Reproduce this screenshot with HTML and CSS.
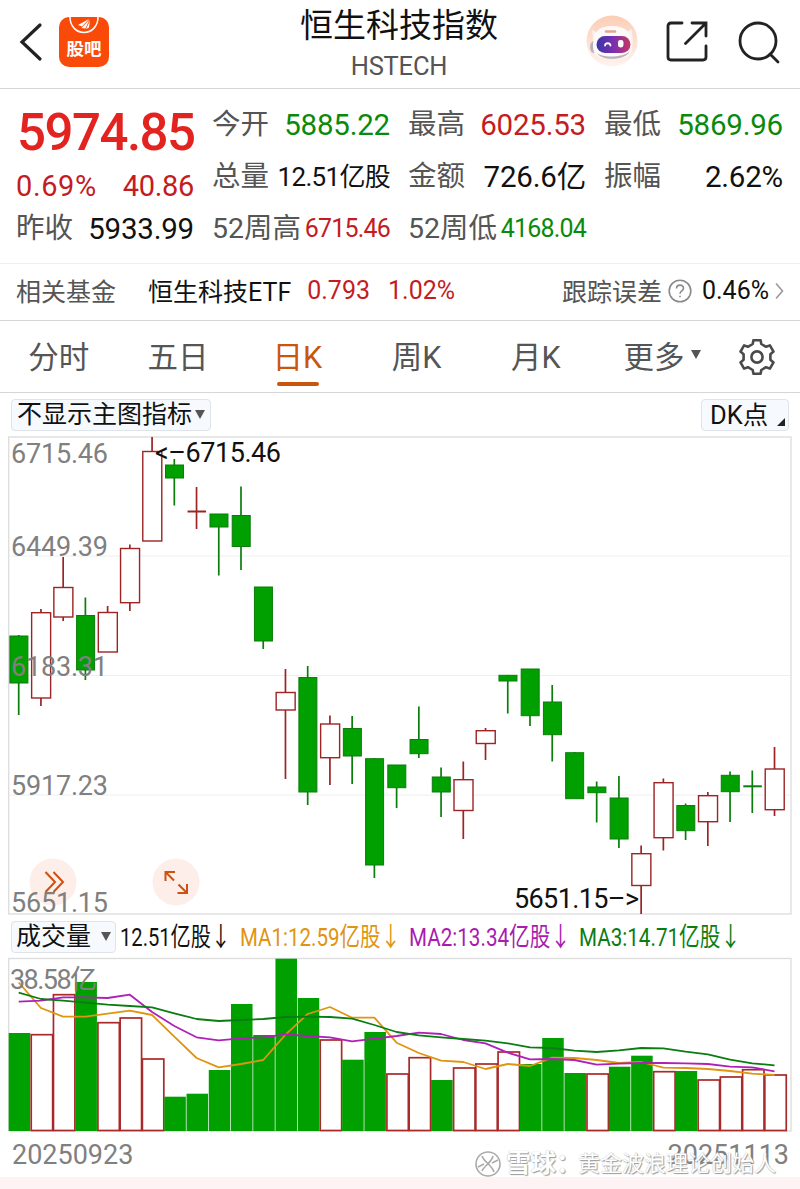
FILE: index.html
```html
<!DOCTYPE html>
<html lang="zh-CN">
	<head>
		<meta charset="UTF-8">
		<meta name="viewport" content="width=device-width, initial-scale=1">
		<title>恒生科技指数 HSTECH</title>
		<link rel="stylesheet" href="styles.css">
	</head>

	<body>
		<header class="topbar">
			<div class="topbar-left">
				<svg class="back" width="24" height="40" viewBox="0 0 24 40"><path d="M21 3L3 20L21 37" /></svg>
				<div class="guba">
					<svg width="30" height="17" viewBox="0 0 30 17">
						<path class="guba-arc" d="M1 0C1 9 7 15.500 15 15.500S29 9 29 0" />
						<path class="guba-leaf" d="M9 8L20 2L13 9.500ZM12.500 11L20.500 2.500L16.500 11.500ZM17 12L21 3.500L20 10.500Z" />
					</svg>
					<span>股吧</span>
				</div>
			</div>
			<div class="topbar-title">
				<h1>恒生科技指数</h1>
				<p>HSTECH</p>
			</div>
			<div class="topbar-right">
				<svg width="52" height="52" viewBox="0 0 52 52">
					<defs>
						<linearGradient id="visor"><stop offset="0" stop-color="#3b36a8" /><stop offset=".5" stop-color="#7a2fb0" /><stop offset="1" stop-color="#c8385e" /></linearGradient>
						<linearGradient id="halo" x2="0" y2="1"><stop offset="0" stop-color="#fccdb6" /><stop offset="1" stop-color="#fff3ee" /></linearGradient>
					</defs>
					<circle cx="26" cy="26" r="25.500" fill="url(#halo)" />
					<path d="M6 15L14 19L8 30ZM38 18L46 14L47 30Z" fill="#f7f2f0" />
					<ellipse cx="8" cy="32" rx="4" ry="6" fill="#b9b1ba" />
					<path d="M7 30C7 17 13 11 26 11S46 17 46 30S40 43 26 43S7 42 7 30Z" fill="#fbf9f9" />
					<path d="M11 38C15 43 38 43 44 36C40 46 15 46 11 38Z" fill="#b9b1bc" />
					<path d="M20 16.500H29" stroke="#e3a58f" stroke-width="2.500" stroke-linecap="round" />
					<rect x="10.500" y="21" width="34" height="17" rx="8.500" fill="url(#visor)" />
					<path d="M19 30.500C19.500 27.500 24 27.500 24.500 30.500" fill="none" stroke="#fff" stroke-width="1.800" stroke-linecap="round" />
					<rect x="32" y="25" width="5.500" height="7.500" rx="2.400" fill="#fff" />
				</svg>
				<svg class="line-icon" width="42" height="42" viewBox="0 0 42 42"><path d="M16 2H5Q2 2 2 5V36Q2 39 5 39H37Q40 39 40 36V25M26 2H40V15M39 3L19.500 22.500" /></svg>
				<svg class="line-icon" width="44" height="44" viewBox="0 0 44 44"><circle cx="20" cy="20" r="18" /><path d="M32 33L40 41" /></svg>
			</div>
		</header>

		<section class="quote">
			<div class="price">5974.85</div>
			<div class="item"><label>今开</label><b class="down">5885.22</b></div>
			<div class="item"><label>最高</label><b class="up">6025.53</b></div>
			<div class="item"><label>最低</label><b class="down">5869.96</b></div>

			<div class="item change"><b class="up percent">0.69%</b><b class="up">40.86</b></div>
			<div class="item"><label>总量</label><b class="tight">12.51亿股</b></div>
			<div class="item"><label>金额</label><b>726.6亿</b></div>
			<div class="item"><label>振幅</label><b>2.62%</b></div>

			<div class="item"><label>昨收</label><b>5933.99</b></div>
			<div class="item"><label>52周高</label><b class="small up">6715.46</b></div>
			<div class="item"><label>52周低</label><b class="small down">4168.04</b></div>
		</section>

		<section class="fund">
			<span class="muted">相关基金</span>
			<span class="fund-name">恒生科技ETF</span>
			<span class="up fund-price">0.793</span>
			<span class="up">1.02%</span>
			<span class="muted fund-error">跟踪误差</span>
			<svg class="help" width="24" height="24" viewBox="0 0 24 24"><circle cx="12" cy="12" r="10.800" /><path d="M8.500 9.500C8.500 5 15.500 5 15.500 9.300C15.500 12 12 12 12 14.800M12 16.800V18.300" /></svg>
			<span>0.46%</span>
			<svg class="more" width="9" height="18" viewBox="0 0 9 18"><path d="M1 1.500L7.500 9L1 16.500" /></svg>
		</section>

		<nav class="tabs">
			<a>分时</a>
			<a>五日</a>
			<a class="active">日K</a>
			<a>周K</a>
			<a>月K</a>
			<a>更多<i class="caret"></i></a>
			<svg class="gear" width="38" height="38" viewBox="-19 -19 38 38">
				<path d="M-4.300 -13L-3.600 -16.800H3.600L4.300 -13L9.100 -10.200L12.900 -11.600L16.500 -5.400L13.400 -2.800V2.800L16.500 5.400L12.900 11.600L9.100 10.200L4.300 13L3.600 16.800H-3.600L-4.300 13L-9.100 10.200L-12.900 11.600L-16.500 5.400L-13.400 2.800V-2.800L-16.500 -5.400L-12.900 -11.600L-9.100 -10.200Z" />
				<circle r="5.600" />
			</svg>
		</nav>

		<div class="toolbar">
			<button class="chip">不显示主图指标<i class="caret"></i></button>
			<button class="chip chip-dk">DK点<i class="corner"></i></button>
		</div>

		<svg id="kline" class="chart" width="800" height="480" viewBox="0 436 800 480"></svg>

		<div class="legend">
			<button class="chip chip-vol">成交量<i class="caret"></i></button>
			<svg width="684" height="34" viewBox="116 0 684 34">
				<text x="120" y="26" textLength="111" lengthAdjust="spacingAndGlyphs" fill="#111">12.51亿股↓</text>
				<text x="240" y="26" textLength="161" lengthAdjust="spacingAndGlyphs" fill="#e0940f">MA1:12.59亿股↓</text>
				<text x="409" y="26" textLength="162" lengthAdjust="spacingAndGlyphs" fill="#a81cb0">MA2:13.34亿股↓</text>
				<text x="579" y="26" textLength="162" lengthAdjust="spacingAndGlyphs" fill="#0a7d12">MA3:14.71亿股↓</text>
			</svg>
		</div>

		<svg id="volume" class="chart" width="800" height="176" viewBox="0 957 800 176"></svg>

		<footer class="dates">
			<span>20250923</span>
			<span>20251113</span>
			<div class="watermark">
				<svg width="28" height="28" viewBox="0 0 28 28"><circle cx="14" cy="14" r="12" /><path d="M8 6C10 12 18 15 20 22M19 6C18 12 10 16 8 21M4 17L10 14M18 13L24 10" /></svg>
				<strong>雪球：</strong><span>黄金波浪理论创始人</span>
			</div>
		</footer>

		<script src="charts.js"></script>
	</body>
</html>
```

FILE: styles.css
```css
body, html { margin: 0; padding: 0; }
body { width: 800px; height: 1189px; overflow: hidden; background: #fff; color: #111; font-family: Roboto, "Noto Sans CJK SC", sans-serif; font-weight: 400; }
h1, p { margin: 0; font-weight: 400; }
svg { display: block; flex: none; }
b { font-weight: 400; }
.up { color: #c41c22; }
.down { color: #0a8a0a; }
.muted { color: #555; }

/* Top bar */
.topbar { display: grid; grid-template-columns: 1fr 220px 1fr; height: 88px; border-bottom: 1px solid #d6d6d6; }
.topbar-left { display: flex; align-items: flex-start; padding: 17px 0 0 19px; gap: 16px; }
.back { margin-top: 5px; fill: none; stroke: #222; stroke-width: 3.2; stroke-linecap: round; }
.guba { display: flex; flex-direction: column; align-items: center; width: 50px; height: 50px; border-radius: 10px; background: #fa4a0a; color: #fff; }
.guba span { font-size: 17.5px; line-height: 26px; font-weight: 700; margin-top: 2px; }
.guba-arc { fill: none; stroke: #fff; stroke-width: 1.5; }
.guba-leaf { fill: #fff; }
.topbar-title { text-align: center; padding-top: 2px; margin-left: -2px; }
.topbar-title h1 { font-size: 33px; line-height: 48px; white-space: nowrap; }
.topbar-title p { font-size: 25.5px; line-height: 32px; color: #555; letter-spacing: -.2px; }
.topbar-right { display: flex; align-items: flex-start; justify-content: flex-end; padding: 15px 18px 0 0; }
.line-icon { margin: 6px 0 0 28px; fill: none; stroke: #222; stroke-width: 2.8; stroke-linecap: round; }
.line-icon + .line-icon { margin-left: 30px; }

/* Quote numbers */
.quote { display: grid; grid-template-columns: 178px 178px 178px 179px; grid-template-rows: 52px 52px 52px; column-gap: 18px; padding: 10px 17px 8px 16px; height: 156px; border-bottom: 1px solid #eee; }
.price { padding-left: 1px; font-size: 51px; line-height: 68px; font-weight: 500; letter-spacing: -1.5px; color: #e3231f; white-space: nowrap; }
.item { display: flex; align-items: center; justify-content: space-between; line-height: 52px; white-space: nowrap; }
.item label { font-size: 28.5px; color: #555; }
.item b { font-size: 29.5px; letter-spacing: -.2px; }
.item .tight { font-size: 26px; letter-spacing: -.7px; }
.item .small { font-size: 25px; letter-spacing: -.8px; }
.change { padding-top: 17px; height: 35px; }
.item.change b { font-size: 29px; letter-spacing: -.3px; }
.item.change .percent { letter-spacing: .6px; }

/* Related fund */
.fund { display: flex; align-items: center; height: 53px; padding: 0 16px 3px 16px; border-bottom: 1px solid #d6d6d6; font-size: 25px; white-space: nowrap; }
.fund-name { margin-left: 32px; }
.fund-price { margin: 0 18px 0 16px; }
.fund-error { margin-left: auto; }
.help { margin: 0 10px 0 6px; fill: none; stroke: #8a8a8a; stroke-width: 1.6; }
.fund .muted, .fund-name { position: relative; top: -1px; }
.more { margin-left: 6px; fill: none; stroke: #999; stroke-width: 1.6; }

/* Period tabs */
.tabs { display: flex; align-items: center; height: 71px; border-bottom: 1px solid #d6d6d6; color: #555; font-size: 30.5px; }
.tabs a { display: flex; align-items: center; justify-content: center; position: relative; box-sizing: border-box; width: 119.3px; height: 71px; padding: 0 2px 4px 0; }
.tabs a.active { color: #c8560f; }
.tabs a.active:after { content: ""; position: absolute; left: 38px; bottom: 6px; width: 42px; height: 4px; border-radius: 2px; background: #c8560f; }
.tabs a:nth-child(6) { width: 134px; }
.gear { margin-left: 8px; fill: none; stroke: #4a4a4a; stroke-width: 2.6; stroke-linejoin: round; }
.caret { display: inline-block; margin-left: 7px; border: 5.5px solid transparent; border-top: 9px solid #555; border-bottom: 0; }

/* Chart toolbars */
.toolbar { display: flex; justify-content: space-between; align-items: center; height: 43px; padding: 0 11px 0 11px; }
.chip { display: flex; align-items: center; box-sizing: border-box; height: 32px; padding: 0 5px; border: 1px solid #dfe4ea; border-radius: 4px; background: #f6f9fd; color: #111; font: inherit; font-size: 25px; line-height: 30px; white-space: nowrap; }
.chip .caret { margin-left: 3px; }
.chip-dk { width: 88px; padding-left: 8px; position: relative; font-size: 25.5px; }
.corner { position: absolute; right: 3px; bottom: 4px; border-left: 8px solid transparent; border-bottom: 8px solid #222; }
.chip-vol { width: 105px; padding: 0 4px; justify-content: space-between; }
.legend { display: flex; align-items: center; height: 41px; padding-left: 11px; }
.legend text { font-size: 26.5px; }

/* Charts */
.frame { fill: none; stroke: #dedede; stroke-width: 1.4; }
.grid { stroke: #eee; stroke-width: 1; }
.rise { fill: #fff; stroke: #9c2424; stroke-width: 1.4; }
.fall { fill: #00a000; stroke: #0a7d0a; stroke-width: 1; }
.wick { stroke-width: 1.7; }
.doji { stroke-width: 2; }
.bar-rise { fill: #fff; stroke: #a82a2a; stroke-width: 1.7; }
.bar-fall { fill: #00a000; }
.ma { fill: none; stroke-width: 1.8; stroke-linejoin: round; }
.axis { font-size: 27px; fill: #808080; }
.mark { font-size: 27px; fill: #111; }
.tool { fill: none; stroke: #d05010; stroke-width: 2; }
.tool-bg { fill: #fdeee9; }

/* Dates */
.dates { display: flex; justify-content: space-between; position: relative; height: 44px; padding: 0 11px 0 12px; font-size: 27px; line-height: 44px; color: #808080; border-bottom: 12px solid #fdf3f5; }
.watermark { position: absolute; left: 474px; top: 9px; display: flex; align-items: center; white-space: nowrap; line-height: 44px; color: #fff; text-shadow: 1px 1px 1px #999, 0 0 1px #aaa; }
.watermark svg { margin-right: 4px; fill: none; stroke: #aaa; stroke-width: 1.6; }
.watermark strong { font-size: 25px; font-weight: 700; width: 72px; }
.watermark span { font-size: 22px; }
```

FILE: charts.js
```javascript
var step = 22.23;
var first = 18.7;

/* type, body top, body bottom, high, low */
var candles = [
	["g", 636, 683, 635, 715], ["r", 612.7, 698, 609, 706], ["r", 587.5, 617, 557, 621], ["g", 615.5, 670, 597.5, 680],
	["r", 612.5, 652, 606, 652], ["r", 548.5, 602.7, 544.5, 611], ["r", 451.5, 541, 437, 541], ["g", 465, 478, 459, 505.5],
	["r", 511.5, 511.5, 487, 529], ["g", 514, 527, 514, 575.5], ["g", 515.5, 546.5, 486.5, 570], ["g", 587, 641, 587, 649],
	["r", 692.5, 710, 669, 779], ["g", 677.5, 792, 666, 805], ["r", 724, 757.7, 715.5, 785], ["g", 728.5, 756, 716, 784],
	["g", 758.7, 865, 758, 878], ["g", 765, 787.7, 765, 808], ["g", 739.5, 753.7, 706.5, 758], ["g", 777, 792, 767.5, 817],
	["r", 779.7, 810.5, 761.5, 839], ["r", 730.7, 743.5, 728, 760], ["g", 675.3, 681, 675, 713.5], ["g", 669, 715.7, 669, 726],
	["g", 702, 734.7, 685, 761.5], ["g", 752.7, 798.7, 752, 798], ["g", 787, 792.7, 781.5, 822.5], ["g", 798, 839, 776, 848],
	["r", 853.7, 885.5, 845.5, 914], ["r", 782.7, 837.7, 778.5, 850.5], ["g", 805.5, 830.7, 803.5, 840], ["r", 795.7, 821.7, 792, 846],
	["g", 775.3, 791.7, 771.5, 822], ["g", 786.3, 786.3, 770.5, 813], ["r", 769, 809.7, 747, 816]
];

var volumes = [
	1033, 1034.7, 994.7, 982, 1022.7, 1018, 1059, 1096.7, 1093.7, 1070, 1004, 1035, 958.7, 998, 1040, 1059.7, 1032, 1074,
	1057.7, 1080, 1068, 1064, 1052, 1064, 1038, 1073, 1074, 1066.7, 1055.7, 1071.7, 1071, 1080, 1077, 1069.7, 1075
];
/* volume colours differ from the candle body on a few days */
var volumeTypes = "grrgrrrgggggggrggrrgrrrgggrggrgrrrr";

var averages = {
	"#e0940f": [982.5, 1008, 1016.7, 1016.7, 1013.7, 1010.7, 1015, 1036.7, 1058, 1067.3, 1064, 1060, 1034.7, 1014, 1007, 1017.7, 1017.7, 1042.7, 1053, 1060.7, 1062, 1069, 1064, 1066, 1057.7, 1058, 1060, 1063, 1062, 1067.7, 1068, 1069, 1071, 1073.7, 1075],
	"#b020b8": [1001.7, 1000.7, 997.3, 997.3, 998, 994.7, 1012, 1026, 1037.3, 1040.3, 1038.3, 1037.3, 1034.3, 1036, 1037.3, 1041.3, 1038.7, 1036, 1032.7, 1034, 1040, 1043.3, 1052.7, 1059.3, 1059, 1060, 1064.7, 1063.7, 1063, 1063, 1063.3, 1064, 1066.7, 1067.3, 1071.3],
	"#0a7d12": [992.7, 999, 1000.7, 1002.7, 1004.7, 1006, 1007.3, 1013.3, 1019, 1021, 1020, 1019, 1017, 1016.7, 1017, 1018.7, 1025, 1032, 1035.3, 1037.3, 1039, 1040.7, 1043.3, 1047.3, 1048, 1050.7, 1052, 1050.3, 1048, 1048.3, 1051.7, 1054.3, 1059.7, 1063.3, 1065.3]
};

function rect(cls, x, y, w, h) {
	return '<rect class="' + cls + '" x="' + x + '" y="' + y + '" width="' + w + '" height="' + h + '"/>';
}

function label(cls, x, y, w, text) {
	return '<text class="' + cls + '" x="' + x + '" y="' + y + '" textLength="' + w + '">' + text + '</text>';
}

/* Candles */
function drawKline() {
	var out = rect("frame", 8.7, 437, 782.3, 477);
	[556, 675.5, 795].forEach(function (y) {
		out += '<path class="grid" d="M9 ' + y + 'H790"/>';
	});
	out += '<circle class="tool-bg" cx="53" cy="882" r="23.500"/><circle class="tool-bg" cx="176" cy="882" r="23.500"/>';
	candles.forEach(function (c, i) {
		var x = first + i * step;
		var cls = c[0] == "r" ? "rise" : "fall";
		out += '<path class="' + cls + ' wick" d="M' + x + ' ' + c[3] + 'V' + c[4] + '"/>';
		if (c[1] == c[2]) {
			out += '<path class="' + cls + ' doji" d="M' + (x - 9) + ' ' + c[1] + 'h18.500"/>';
		} else {
			out += rect(cls, x - (cls == "rise" ? 9.3 : 8.8), c[1], cls == "rise" ? 19 : 18, c[2] - c[1]);
		}
	});
	out += '<path class="tool" d="M45.500 872L55 882L45.500 892M53.500 872L63 882L53.500 892"/>';
	out += '<path class="tool" d="M165.500 881V872H175M166 872.500L174 880.500M177.500 893H187V884M186.500 892.500L178.500 884.500"/>';
	out += label("axis", 11, 463, 97, "6715.46");
	out += label("axis", 11, 556, 97, "6449.39");
	out += label("axis", 11, 675.5, 97, "6183.31");
	out += label("axis", 11, 795, 97, "5917.23");
	out += label("axis", 11, 911.5, 97, "5651.15");
	out += label("mark", 155, 462, 126, "&lt;–6715.46");
	out += label("mark", 514, 908, 125, "5651.15–&gt;");
	document.getElementById("kline").innerHTML = out;
}

/* Volume bars and moving averages */
function drawVolume() {
	var bottom = 1130.5;
	var out = rect("frame", 8.7, 958.5, 782.3, 172.5);
	volumes.forEach(function (top, i) {
		var x = 8.7 + i * step;
		if (volumeTypes[i] == "r") {
			out += rect("bar-rise", x + 0.3, top, step - 0.8, bottom - top);
		} else {
			out += rect("bar-fall", x, top, step - 0.7, bottom - top + 0.5);
		}
	});
	for (var color in averages) {
		var points = averages[color].map(function (y, i) {
			return (first + i * step) + "," + y;
		});
		out += '<polyline class="ma" stroke="' + color + '" points="' + points.join(" ") + '"/>';
	}
	out += label("axis", 10, 988.5, 87, "38.58亿");
	document.getElementById("volume").innerHTML = out;
}

drawKline();
drawVolume();
```
